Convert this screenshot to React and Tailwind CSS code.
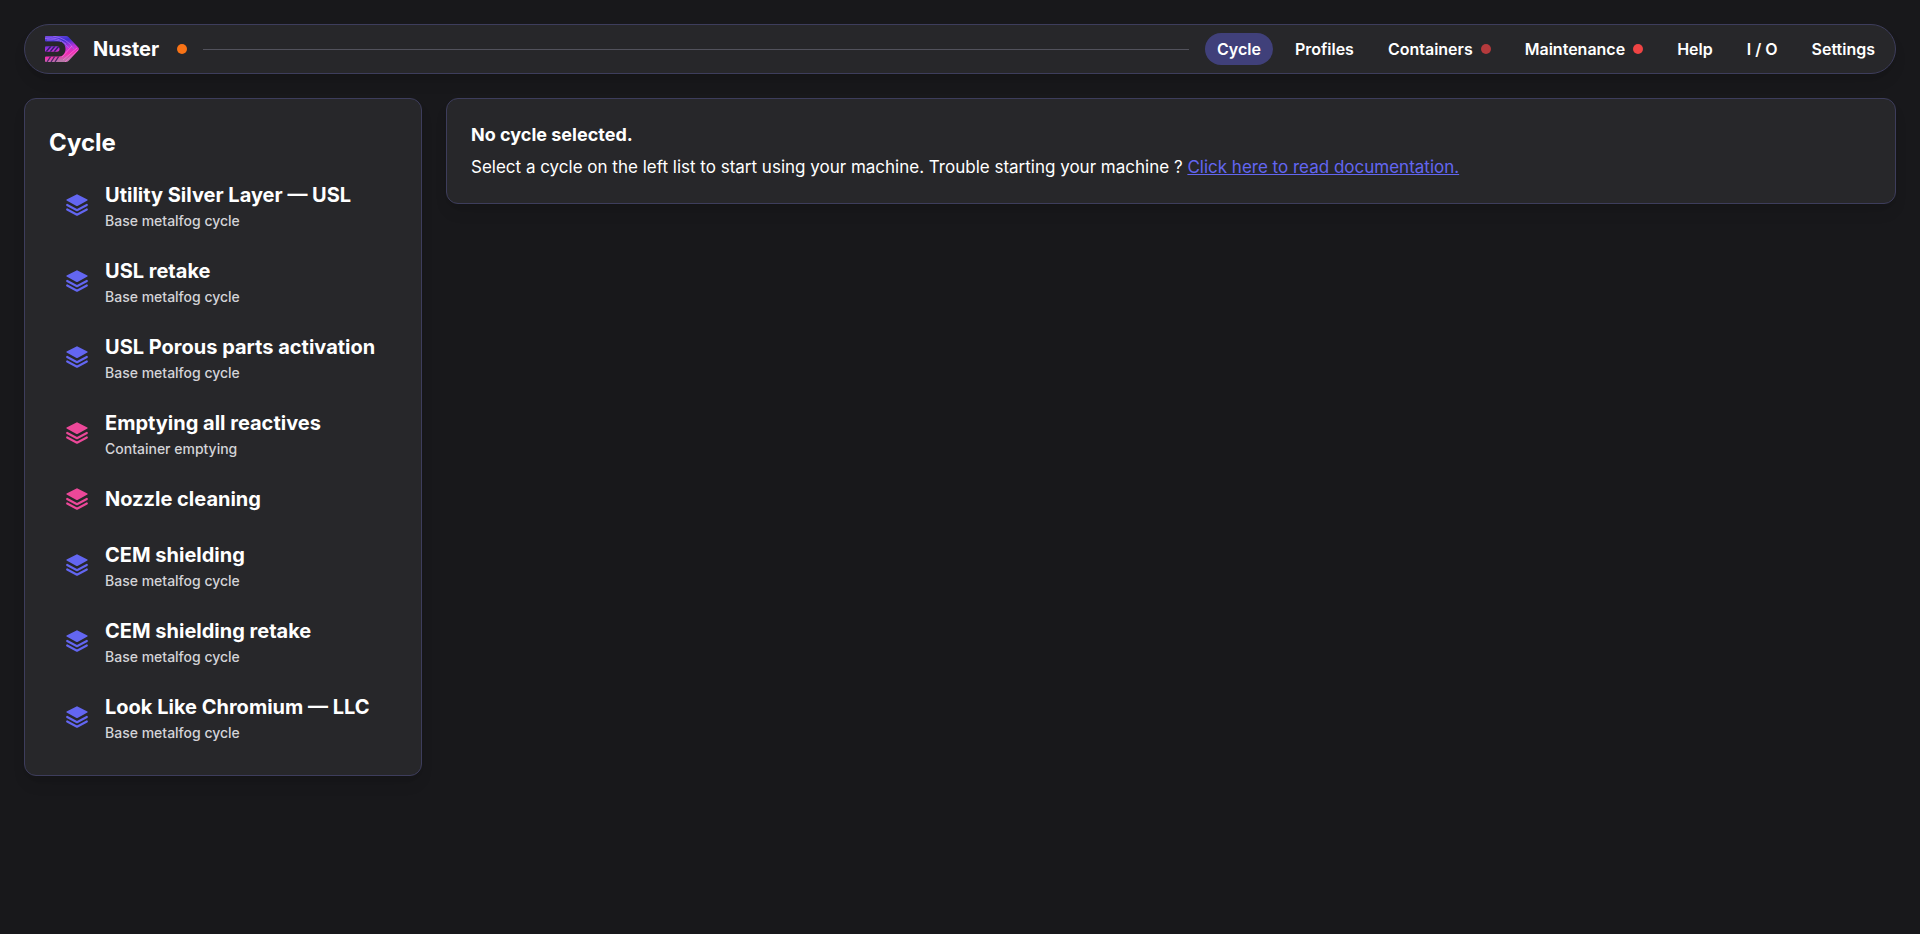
const NAV = [
  { label: "Cycle", active: true },
  { label: "Profiles" },
  { label: "Containers", dot: "bg-[#b53a3c]" },
  { label: "Maintenance", dot: "bg-[#ef4444]" },
  { label: "Help" },
  { label: "I / O" },
  { label: "Settings" },
];

const CYCLES = [
  { name: "Utility Silver Layer — USL", type: "Base metalfog cycle", color: "text-[#6366f1]" },
  { name: "USL retake", type: "Base metalfog cycle", color: "text-[#6366f1]" },
  { name: "USL Porous parts activation", type: "Base metalfog cycle", color: "text-[#6366f1]" },
  { name: "Emptying all reactives", type: "Container emptying", color: "text-[#ec4899]" },
  { name: "Nozzle cleaning", color: "text-[#ec4899]" },
  { name: "CEM shielding", type: "Base metalfog cycle", color: "text-[#6366f1]" },
  { name: "CEM shielding retake", type: "Base metalfog cycle", color: "text-[#6366f1]" },
  { name: "Look Like Chromium — LLC", type: "Base metalfog cycle", color: "text-[#6366f1]" },
];

function Logo() {
  return (
    <svg viewBox="0 0 34 26" className="h-[26px] w-[34px]" aria-hidden="true">
      <defs>
        <linearGradient id="logo-fill" x1="0" y1="0" x2="0.25" y2="1">
          <stop offset="0" stopColor="#7a4be0" />
          <stop offset="0.28" stopColor="#3a2fd0" />
          <stop offset="0.55" stopColor="#b932d8" />
          <stop offset="0.8" stopColor="#f02fb0" />
          <stop offset="1" stopColor="#b878a8" />
        </linearGradient>
        <clipPath id="logo-shape">
          <path d="M1 0H21C22 0 22.800 0.300 23.500 1L33.300 11.500C34.200 12.500 34.200 13.500 33.300 14.500L23.500 25C22.800 25.700 22 26 21 26H1Q0 26 0 25V21.500Q0 20.500 1 20.500H14C18 20.500 20.500 17 20.500 13S18 5.500 14 5.500H1Q0 5.500 0 4.500V1Q0 0 1 0Z" />
          <path d="M1 10.300H12Q14.500 10.300 14.500 13T12 15.700H1Q0 15.700 0 14.700V11.300Q0 10.300 1 10.300Z" />
        </clipPath>
      </defs>
      <g clipPath="url(#logo-shape)">
        <rect width="34" height="26" fill="url(#logo-fill)" />
        <g fill="none" strokeWidth="0.8">
          <path d="M0 2.500Q12 0 21 8M2 4Q16 2 24 12M8 0Q22 2 29 13" stroke="#a06af5" />
          <path d="M1 16L6 10M5 16L10 10M9 16L14 10" stroke="#33206e" strokeWidth="1.500" />
          <path d="M2 26L6 20M6 26L10 20M10 26L14 20" stroke="#4a2468" strokeWidth="1.300" />
          <path d="M18 24L32 12M20 26L33 14M17 21L27 10" stroke="#ff6ad8" />
        </g>
      </g>
    </svg>
  );
}

function LayersIcon({ className }) {
  return (
    <svg viewBox="0 0 24 24" fill="currentColor" className={className} aria-hidden="true">
      <path d="M11.500 1.400Q12 1.100 12.500 1.400L22.400 6.600Q23 7 22.400 7.400L12.500 12.900Q12 13.200 11.500 12.900L1.600 7.400Q1 7 1.600 6.600Z" />
      <path
        d="M2.200 12L12 17.200L21.800 12M2.200 16.500L12 21.700L21.800 16.500"
        fill="none"
        stroke="currentColor"
        strokeWidth="2.200"
        strokeLinecap="round"
        strokeLinejoin="round"
      />
    </svg>
  );
}

function Header() {
  return (
    <header className="flex h-[50px] items-center rounded-full border border-[#3d3d5c] bg-zinc-800 pr-2 pl-5 shadow-lg">
      <Logo />
      <span className="ml-3.5 text-xl font-bold">Nuster</span>
      <span className="ml-[18px] size-2.5 rounded-full bg-[#f97316]" />
      <span className="mx-4 h-px flex-1 bg-zinc-600" />
      <nav className="flex items-center gap-2.5">
        {NAV.map((item) => (
          <a
            key={item.label}
            href="#"
            aria-current={item.active ? "page" : undefined}
            className={`flex h-8 items-center gap-2 rounded-full px-3 font-semibold ${item.active ? "bg-[#40407a]" : ""}`}
          >
            {item.label}
            {item.dot && <span className={`size-2.5 rounded-full ${item.dot}`} />}
          </a>
        ))}
      </nav>
    </header>
  );
}

function CycleItem({ cycle }) {
  return (
    <li>
      <button type="button" className="flex w-full items-center gap-4 rounded-xl px-4 py-2.5 text-left">
        <LayersIcon className={`size-6 shrink-0 ${cycle.color}`} />
        <span className="flex flex-col gap-1">
          <span className="text-xl leading-7 font-bold">{cycle.name}</span>
          {cycle.type && <span className="text-sm leading-4 font-medium text-zinc-300">{cycle.type}</span>}
        </span>
      </button>
    </li>
  );
}

export default function App() {
  return (
    <div className="flex min-h-screen flex-col gap-6 bg-zinc-900 p-6 font-['Inter',sans-serif] text-white">
      <Header />
      <div className="flex items-start gap-6">
        <aside className="w-[398px] shrink-0 rounded-xl border border-[#3d3d5c] bg-zinc-800 p-6 shadow-lg">
          <h1 className="text-2xl leading-10 font-bold">Cycle</h1>
          <ul className="mt-2 flex flex-col gap-2">
            {CYCLES.map((cycle) => (
              <CycleItem key={cycle.name} cycle={cycle} />
            ))}
          </ul>
        </aside>
        <main className="min-w-0 flex-1 rounded-xl border border-[#3d3d5c] bg-zinc-800 p-6 shadow-lg">
          <h2 className="text-lg leading-6 font-bold">No cycle selected.</h2>
          <p className="mt-2 text-[17px] leading-6">
            Select a cycle on the left list to start using your machine. Trouble starting your machine ?{" "}
            <a href="#" className="text-[#6366f1] underline">
              Click here to read documentation.
            </a>
          </p>
        </main>
      </div>
    </div>
  );
}
